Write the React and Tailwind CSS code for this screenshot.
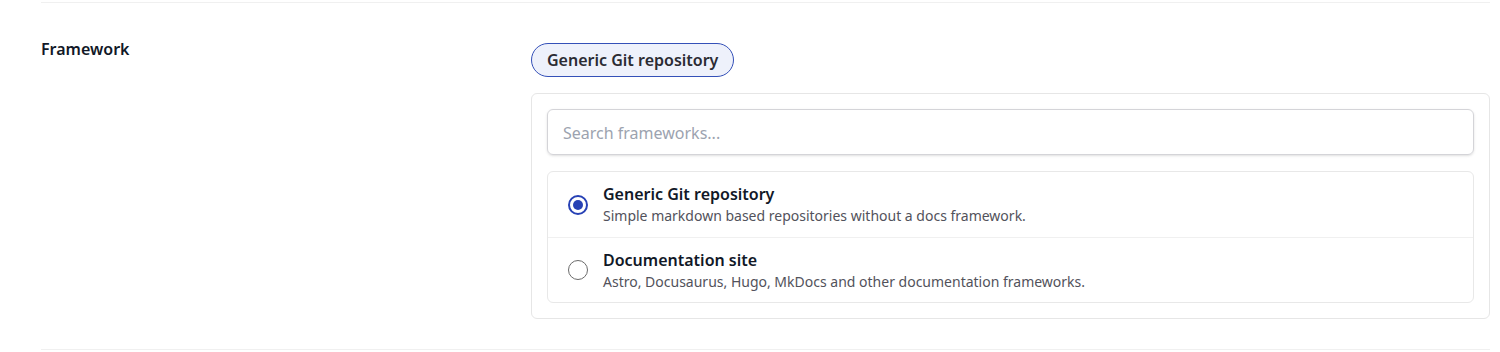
import React, { useState } from 'react';

const options = [
    {
        id: 'git',
        title: 'Generic Git repository',
        description: 'Simple markdown based repositories without a docs framework.',
    },
    {
        id: 'docs',
        title: 'Documentation site',
        description: 'Astro, Docusaurus, Hugo, MkDocs and other documentation frameworks.',
    },
];

function Radio({ checked }) {
    if (checked) {
        return (
            <span className="w-5 h-5 rounded-full border-2 border-[#2741b5] flex items-center justify-center shrink-0">
                <span className="w-[10px] h-[10px] rounded-full bg-[#2741b5]" />
            </span>
        );
    }
    return <span className="w-5 h-5 rounded-full border border-[#6b6b6b] shrink-0" />;
}

export default function App() {
    const [selected, setSelected] = useState('git');
    const current = options.find((o) => o.id === selected);

    return (
        <div className="bg-white pt-[2px] font-['Noto_Sans',sans-serif]">
            <div className="ml-[41px] mr-[10px] border-t border-b border-[#f0f0f0] grid grid-cols-[490px_1fr] pt-[37px] pb-[30px]">
                <div className="text-[16px] font-semibold text-[#111827] leading-6 -mt-[3px]">Framework</div>
                <div className="flex flex-col items-start">
                    <span className="h-[34px] px-[15px] flex items-center rounded-full border-[1.5px] border-[#3450b8] bg-[#eef1fb] text-[16px] font-semibold text-[#2b2b33] mt-[3px]">
                        {current.title}
                    </span>
                    <div className="mt-[16px] w-full border border-[#e6e6e6] rounded-md p-[15px] flex flex-col gap-[16px]">
                        <input
                            type="text"
                            placeholder="Search frameworks..."
                            className="w-full h-[46px] px-[15px] pt-[2px] border border-[#d4d4d8] rounded-md shadow-sm text-[16px] text-[#27272a] placeholder:text-[#9ca3af] outline-none"
                        />
                        <div className="border border-[#e8e8e8] rounded-md">
                            {options.map((o, i) => (
                                <button
                                    key={o.id}
                                    onClick={() => setSelected(o.id)}
                                    className={`w-full h-[65px] flex items-center gap-[15px] pl-[20px] text-left ${i > 0 ? 'border-t border-[#f0f0f0]' : ''}`}
                                >
                                    <Radio checked={selected === o.id} />
                                    <span className="flex flex-col pt-[1px]">
                                        <span className="text-[16px] font-semibold text-[#111827] leading-[22px]">{o.title}</span>
                                        <span className="text-[14px] text-[#52525b] leading-[22px]">{o.description}</span>
                                    </span>
                                </button>
                            ))}
                        </div>
                    </div>
                </div>
            </div>
        </div>
    );
}
